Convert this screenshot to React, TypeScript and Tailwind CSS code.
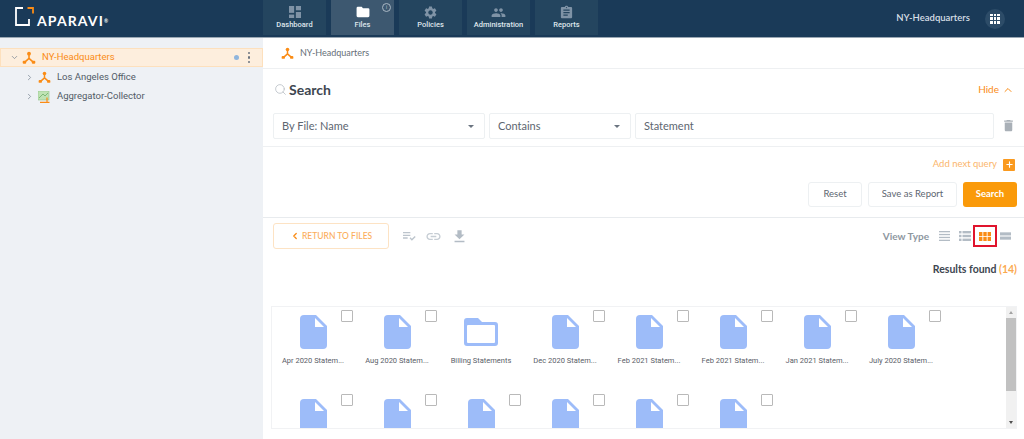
import React from "react";
import { ChevronDown, ChevronRight, ChevronUp, ChevronLeft, Search, Plus } from "lucide-react";
import { MdSettings, MdPeople, MdAssignment, MdDelete, MdLink, MdPlaylistAddCheck, MdFileDownload } from "react-icons/md";

const Q = "font-['Lato','Noto_Sans',sans-serif]";

function Nodes({ size = 16 }: { size?: number }) {
  return (
    <svg width={size} height={size} viewBox="0 0 16 16" fill="none">
      <path d="M8 4.5V8.5M8 8.5L3.5 12.5M8 8.5L12.5 12.5" stroke="#fa8c16" strokeWidth="1.8" />
      <circle cx="8" cy="3" r="2.2" fill="#fa8c16" />
      <rect x="0.8" y="11" width="4" height="3.6" rx="1.2" fill="#fa8c16" />
      <rect x="11.2" y="11" width="4" height="3.6" rx="1.2" fill="#fa8c16" />
    </svg>
  );
}

function FileIcon() {
  return (
    <svg width="27" height="34" viewBox="0 0 27 34">
      <path d="M4 0H16L27 11V30a4 4 0 0 1-4 4H4a4 4 0 0 1-4-4V4a4 4 0 0 1 4-4Z" fill="#9dbcf9" />
      <path d="M15 3L24 12H15Z" fill="#fff" />
    </svg>
  );
}

function FolderIcon() {
  return (
    <svg width="34" height="28" viewBox="0 0 34 28">
      <path d="M3 0H14L18 4H31a3 3 0 0 1 3 3V25a3 3 0 0 1-3 3H3a3 3 0 0 1-3-3V3a3 3 0 0 1 3-3Z" fill="#9dbcf9" />
      <rect x="3" y="7" width="28" height="18" rx="1" fill="#fff" />
    </svg>
  );
}

function DashIcon() {
  return (
    <svg width="12" height="12" viewBox="0 0 14 14" fill="#7f93a6">
      <rect x="0" y="0" width="6" height="8" />
      <rect x="8" y="0" width="6" height="5" />
      <rect x="0" y="10" width="6" height="4" />
      <rect x="8" y="7" width="6" height="7" />
    </svg>
  );
}

function FilesIcon() {
  return (
    <svg width="14" height="12" viewBox="0 0 15 14" fill="#fff">
      <path d="M1.5 1H6L7.5 2.5H13.5A1.5 1.5 0 0 1 15 4V11.5A1.5 1.5 0 0 1 13.5 13H1.5A1.5 1.5 0 0 1 0 11.5V2.5A1.5 1.5 0 0 1 1.5 1Z" />
    </svg>
  );
}

function NavItem({ label, icon, active, info }: { label: string; icon: React.ReactNode; active?: boolean; info?: boolean }) {
  return (
    <div className={`relative w-[63px] h-[35px] flex flex-col items-center pt-[5px] ${active ? "bg-[#3d5870]" : "bg-[#24455f]"}`}>
      <div className="h-[14px] flex items-center justify-center">{icon}</div>
      <div className="mt-[1px] text-[7.5px] leading-[9px] font-medium text-[#dfe6ec] font-['Roboto',sans-serif] whitespace-nowrap">{label}</div>
      {info && (
        <div className="absolute top-[3px] right-[3px] w-[9px] h-[9px] rounded-full border border-[#a9b7c4] text-[6px] leading-[7px] text-center text-[#a9b7c4]">i</div>
      )}
    </div>
  );
}

function TreeRow({ label, icon }: { label: string; icon: React.ReactNode }) {
  return (
    <div className="h-[19px] flex items-center pl-[25px]">
      <ChevronRight size={9} strokeWidth={2} className="text-[#7b8794]" />
      <div className="ml-[2px] w-[16px] flex justify-center">{icon}</div>
      <div className="ml-[5px] text-[9.5px] text-[#515b66] font-['Roboto',sans-serif]">{label}</div>
    </div>
  );
}

function AggIcon() {
  return (
    <svg width="12" height="12" viewBox="0 0 12 12">
      <rect x="0" y="0" width="11" height="9" fill="#bfe3b4" stroke="#8fc38a" strokeWidth="0.6" />
      <path d="M1 7L5 3L7 5L10 2" stroke="#6fae69" strokeWidth="0.8" fill="none" />
      <path d="M2 11.3H11.5M9 11V6.5" stroke="#fa8c16" strokeWidth="1.2" fill="none" />
    </svg>
  );
}

function Select({ label, className }: { label: string; className: string }) {
  return (
    <div className={`h-[26px] shrink-0 border border-[#edf0f2] rounded-[2px] flex items-center justify-between pl-[8px] pr-[10px] ${className}`}>
      <span className={`text-[11px] text-[#5d6670] ${Q}`}>{label}</span>
      <span className="w-0 h-0 border-x-[3.5px] border-x-transparent border-t-[3.5px] border-t-[#6b7480]" />
    </div>
  );
}

function ListLines() {
  return (
    <svg width="11" height="10" viewBox="0 0 11 10" fill="#b3bcc5" className="block">
      <rect y="0" width="11" height="1.3" />
      <rect y="2.9" width="11" height="1.3" />
      <rect y="5.8" width="11" height="1.3" />
      <rect y="8.7" width="11" height="1.3" />
    </svg>
  );
}

function ListBullets() {
  return (
    <svg width="12" height="10" viewBox="0 0 12 10" fill="#b3bcc5" className="block">
      <rect x="0" y="0" width="2.5" height="2.4" />
      <rect x="0" y="3.8" width="2.5" height="2.4" />
      <rect x="0" y="7.6" width="2.5" height="2.4" />
      <rect x="3.5" y="0" width="8.5" height="2.4" />
      <rect x="3.5" y="3.8" width="8.5" height="2.4" />
      <rect x="3.5" y="7.6" width="8.5" height="2.4" />
    </svg>
  );
}

function GridIco() {
  return (
    <svg width="12" height="9" viewBox="0 0 12 9" fill="#fa8c16" className="block">
      {[0, 4.3, 8.6].map((x) =>
        [0, 4.9].map((y) => <rect key={`${x}-${y}`} x={x} y={y} width="3.4" height="4.1" />)
      )}
    </svg>
  );
}

function WideIco() {
  return (
    <svg width="11" height="8" viewBox="0 0 12 8" fill="#b3bcc5" className="block">
      <rect width="12" height="3.4" />
      <rect y="4.6" width="12" height="3.4" />
    </svg>
  );
}

function Cell({ label, folder }: { label?: string; folder?: boolean }) {
  return (
    <div className="relative w-[84px] h-[84px] flex flex-col items-center pt-[8px] shrink-0">
      <div className="h-[34px] flex items-center justify-center">{folder ? <FolderIcon /> : <FileIcon />}</div>
      {label && (
        <div className="mt-[6px] text-[7.5px] leading-[12px] font-normal text-[#5a6068] font-['Roboto',sans-serif] whitespace-nowrap">{label}</div>
      )}
      {!folder && <div className="absolute top-[3px] left-[70px] w-[12px] h-[12px] border border-[#b9b9b9] rounded-[1px] bg-white" />}
    </div>
  );
}

const row1: { label: string; folder?: boolean }[] = [
  { label: "Apr 2020 Statem..." },
  { label: "Aug 2020 Statem..." },
  { label: "Billing Statements", folder: true },
  { label: "Dec 2020 Statem..." },
  { label: "Feb 2021 Statem..." },
  { label: "Feb 2021 Statem..." },
  { label: "Jan 2021 Statem..." },
  { label: "July 2020 Statem..." },
];

export default function App() {
  return (
    <div className="w-[1024px] h-[439px] overflow-hidden bg-white flex flex-col">
      {/* Header */}
      <header className="h-[38px] shrink-0 bg-[#1a3a58] border-b border-[#9aa7b3] flex items-start">
        <div className="w-[263px] h-[37px] flex items-center pl-[15px]">
          <svg width="19" height="19" viewBox="0 0 19 19" fill="none" className="-mt-[5px]">
            <path d="M8 1H1V18H14V12" stroke="#fff" strokeWidth="1.8" />
            <path d="M12.5 1H18V6.5" stroke="#fa8c16" strokeWidth="1.8" />
          </svg>
          <span className={`ml-[3px] mt-[4px] text-[14px] leading-none font-bold tracking-[1.1px] text-white ${Q}`}>
            APARAVI
            <sup className="text-[5px]">®</sup>
          </span>
        </div>
        <nav className="flex gap-[5px]">
          <NavItem label="Dashboard" icon={<DashIcon />} />
          <NavItem label="Files" icon={<FilesIcon />} active info />
          <NavItem label="Policies" icon={<MdSettings size={15} className="text-[#7f93a6]" />} />
          <NavItem label="Administration" icon={<MdPeople size={15} className="text-[#7f93a6]" />} />
          <NavItem label="Reports" icon={<MdAssignment size={15} className="text-[#7f93a6]" />} />
        </nav>
        <div className="flex-1 h-[37px] flex items-center justify-end pr-[19px]">
          <span className={`text-[9.5px] font-semibold text-[#d6dee5] ${Q}`}>NY-Headquarters</span>
          <div className="ml-[15px] w-[20px] h-[20px] rounded-full bg-[#2d4c68] grid grid-cols-3 gap-[1px] p-[5px]">
            {Array.from({ length: 9 }).map((_, i) => (
              <span key={i} className="bg-white" />
            ))}
          </div>
        </div>
      </header>

      <div className="flex-1 flex min-h-0">
        {/* Sidebar */}
        <aside className="w-[263px] shrink-0 bg-[#eef1f5] pt-[10px]">
          <div className="h-[19px] mb-[1px] bg-[#fdeedd] border border-[#fde0bd] flex items-center pl-[9px] pr-[12px]">
            <ChevronDown size={9} strokeWidth={2} className="text-[#7b8794]" />
            <div className="ml-[3px]"><Nodes size={14} /></div>
            <span className="ml-[6px] text-[9.5px] text-[#fa8c16] font-['Roboto',sans-serif]">NY-Headquarters</span>
            <span className="ml-auto w-[5px] h-[5px] rounded-full bg-[#8fb5dd]" />
            <span className="ml-[9px] flex flex-col gap-[2px]">
              <span className="w-[2.5px] h-[2.5px] rounded-full bg-[#6b7480]" />
              <span className="w-[2.5px] h-[2.5px] rounded-full bg-[#6b7480]" />
              <span className="w-[2.5px] h-[2.5px] rounded-full bg-[#6b7480]" />
            </span>
          </div>
          <TreeRow label="Los Angeles Office" icon={<Nodes size={13} />} />
          <TreeRow label="Aggregator-Collector" icon={<AggIcon />} />
        </aside>

        {/* Main */}
        <main className="flex-1 min-w-0 flex flex-col">
          <div className="h-[31px] shrink-0 border-b border-[#eef0f2] flex items-center pl-[18px]">
            <Nodes size={13} />
            <span className={`ml-[6px] -mt-[1px] text-[9px] text-[#656e77] ${Q}`}>NY-Headquarters</span>
          </div>

          <div className="h-[44px] shrink-0 flex items-center justify-between pl-[11px] pr-[10px] pb-[3px]">
            <div className="flex items-center">
              <Search size={13} strokeWidth={1.5} className="text-[#b9bfc5]" />
              <span className={`ml-[2px] text-[14px] font-bold text-[#3d4650] ${Q}`}>Search</span>
            </div>
            <div className={`flex items-center text-[10px] text-[#fa8c16] ${Q}`}>
              Hide <ChevronUp size={12} strokeWidth={2} className="ml-[3px]" />
            </div>
          </div>

          <div className="h-[34px] shrink-0 border-b border-[#eef0f2] flex items-start pl-[10px]">
            <Select label="By File: Name" className="w-[212px]" />
            <Select label="Contains" className="ml-[4px] w-[142px]" />
            <div className="ml-[4px] shrink-0 w-[359px] h-[26px] border border-[#edf0f2] rounded-[2px] flex items-center pl-[8px]">
              <span className={`text-[11px] text-[#5d6670] ${Q}`}>Statement</span>
            </div>
            <MdDelete size={15} className="ml-[7px] mt-[5px] shrink-0 text-[#a9b0b7]" />
          </div>

          <div className="h-[35px] shrink-0 flex items-center justify-end pr-[9px]">
            <span className={`text-[9.5px] text-[#fbb56b] ${Q}`}>Add next query</span>
            <span className="ml-[6px] w-[12px] h-[12px] rounded-[1px] bg-[#fa9a1f] flex items-center justify-center">
              <Plus size={9} strokeWidth={3} className="text-white" />
            </span>
          </div>

          <div className="h-[36px] shrink-0 border-b border-[#e8ebee] flex items-start justify-end pr-[7px]">
            <div className={`w-[54px] h-[25px] border border-[#edf0f2] rounded-[3px] flex items-center justify-center text-[9.5px] text-[#5d6670] ${Q}`}>Reset</div>
            <div className={`ml-[6px] w-[89px] h-[25px] border border-[#edf0f2] rounded-[3px] flex items-center justify-center text-[9.5px] text-[#5d6670] ${Q}`}>Save as Report</div>
            <div className={`ml-[6px] w-[54px] h-[25px] rounded-[3px] bg-[#fa9a0a] flex items-center justify-center text-[9.5px] font-bold text-white ${Q}`}>Search</div>
          </div>

          <div className="h-[36px] shrink-0 flex items-center pl-[10px] pr-[13px]">
            <div className={`w-[116px] h-[26px] border border-[#fde3c4] rounded-[3px] flex items-center pl-[16px] text-[8.5px] font-medium text-[#fbae5c] ${Q}`}>
              <ChevronLeft size={10} strokeWidth={3} className="text-[#fa8c16] mr-[2px]" />
              RETURN TO FILES
            </div>
            <MdPlaylistAddCheck size={16} className="ml-[12px] text-[#bcc4cc]" />
            <MdLink size={17} className="ml-[8px] text-[#c6cdd4]" />
            <MdFileDownload size={17} className="ml-[9px] text-[#b3bcc5]" />

            <span className={`ml-auto text-[10px] font-bold text-[#8e979f] ${Q}`}>View Type</span>
            <span className="ml-[10px]"><ListLines /></span>
            <span className="ml-[9px]"><ListBullets /></span>
            <span className="ml-[2px] w-[24px] h-[22px] border-[2px] border-[#e0142d] flex items-center justify-center"><GridIco /></span>
            <span className="ml-[3px]"><WideIco /></span>
          </div>

          <div className={`h-[28px] shrink-0 flex items-center justify-end pr-[7px] pt-[4px] text-[10.5px] font-bold text-[#3d4650] ${Q}`}>
            Results found&nbsp;<span className="text-[#fba94f]">(14)</span>
          </div>

          <div className="mt-[24px] ml-[8px] mr-[7px] h-[123px] shrink-0 border border-[#f1f2f4] flex overflow-hidden">
            <div className="flex-1 flex flex-wrap content-start overflow-hidden -ml-px">
              {row1.map((c, i) => (
                <Cell key={i} label={c.label} folder={c.folder} />
              ))}
              {Array.from({ length: 6 }).map((_, i) => (
                <Cell key={`r${i}`} />
              ))}
            </div>
            <div className="w-[10px] shrink-0 bg-[#f1f1f1] flex flex-col items-center">
              <span className="mt-[4px] w-0 h-0 border-x-[2.5px] border-x-transparent border-b-[3px] border-b-[#a3a3a3]" />
              <div className="mt-[4px] w-full h-[73px] bg-[#c1c1c1]" />
              <span className="mt-auto mb-[4px] w-0 h-0 border-x-[2.5px] border-x-transparent border-t-[3px] border-t-[#505050]" />
            </div>
          </div>
        </main>
      </div>
    </div>
  );
}
